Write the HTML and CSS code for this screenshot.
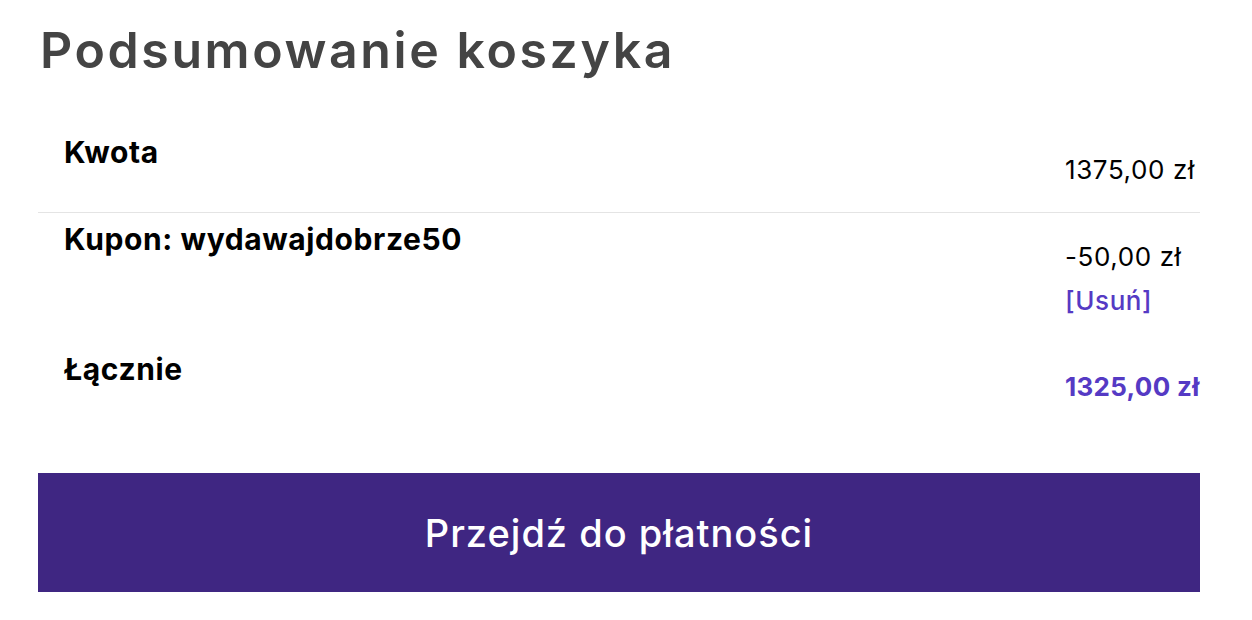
FILE: index.html
```html
<!DOCTYPE html>
<html lang="pl">
<head>
<meta charset="utf-8">
<title>Podsumowanie koszyka</title>
<link rel="stylesheet" href="styles.css">
</head>
<body>
<div class="cart-totals">
  <h2 class="cart-title">Podsumowanie koszyka</h2>
  <div class="totals">
    <div class="row row-subtotal">
      <div class="label">Kwota</div>
      <div class="value"><span class="line">1375,00 zł</span></div>
    </div>
    <div class="row">
      <div class="label">Kupon: wydawajdobrze50</div>
      <div class="value">
        <span class="line">-50,00 zł</span>
        <a class="line remove" href="#">[Usuń]</a>
      </div>
    </div>
    <div class="row">
      <div class="label">Łącznie</div>
      <div class="value"><strong class="line total">1325,00 zł</strong></div>
    </div>
  </div>
  <a class="checkout" href="#">Przejdź do płatności</a>
</div>
</body>
</html>
```
FILE: styles.css
```css
html, body {
  margin: 0;
  padding: 0;
  background: #ffffff;
}

body {
  font-family: "Inter", "Liberation Sans", sans-serif;
  color: #000000;
}

.cart-totals {
  margin: 0 52px 0 38px;
  padding-top: 20px;
}

.cart-title {
  margin: 0;
  padding-left: 2px;
  font-size: 50px;
  line-height: 60px;
  font-weight: 600;
  letter-spacing: 2.6px;
  color: #444444;
}

.totals {
  margin-top: 46px;
}

.row {
  display: grid;
  grid-template-columns: 1fr 135px;
  align-items: start;
}

.row-subtotal {
  border-bottom: 1px solid #e4e4e4;
}

.label {
  padding: 8px 0 0 26px;
  font-size: 30px;
  line-height: 36px;
  font-weight: 700;
  letter-spacing: 0.6px;
}

.value {
  padding: 22px 0 20px;
  font-size: 26px;
  line-height: 44px;
  letter-spacing: 0.6px;
}

.line {
  display: block;
  white-space: nowrap;
}

.remove {
  color: #553ac4;
  text-decoration: none;
  font-weight: 500;
}

.total {
  color: #553ac4;
  font-weight: 700;
  letter-spacing: 0.3px;
}

.checkout {
  display: flex;
  align-items: center;
  justify-content: center;
  margin-top: 44px;
  height: 119px;
  background: #3f2682;
  color: #ffffff;
  font-size: 38px;
  font-weight: 500;
  letter-spacing: 1px;
  text-decoration: none;
}
```
